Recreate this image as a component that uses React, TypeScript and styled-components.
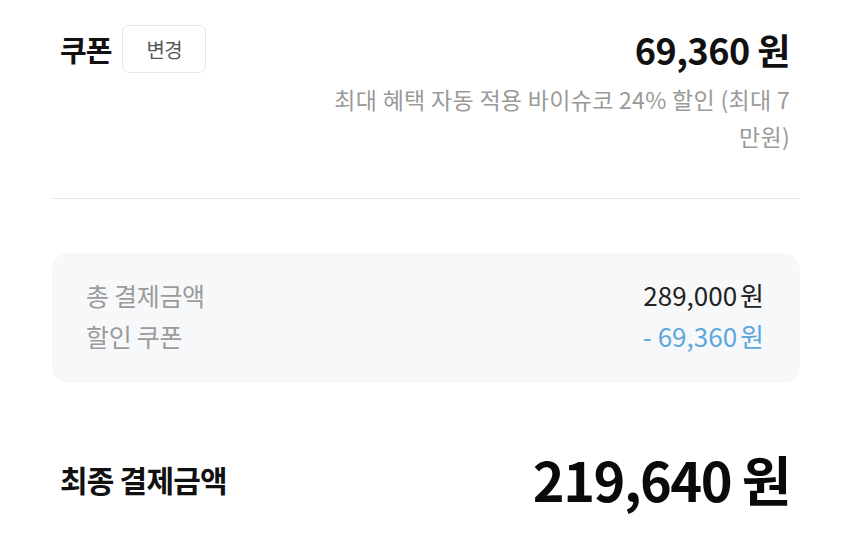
import React from 'react';
import styled, { createGlobalStyle } from 'styled-components';

const GlobalStyle = createGlobalStyle`
	html, body {
		margin: 0;
		padding: 0;
		background: #ffffff;
	}
	body {
		font-family: 'Noto Sans CJK KR', 'Noto Sans', sans-serif;
		color: #111111;
	}
`;

const summary = [
	{ label: '총 결제금액', value: '289,000', discount: false },
	{ label: '할인 쿠폰', value: '- 69,360', discount: true },
];

const App = () => {
	return (
		<Page>
			<GlobalStyle />
			<CouponSection>
				<CouponRow>
					<TitleGroup>
						<SectionTitle>쿠폰</SectionTitle>
						<ChangeButton>변경</ChangeButton>
					</TitleGroup>
					<CouponAmount>69,360 원</CouponAmount>
				</CouponRow>
				<CouponNote>
					최대 혜택 자동 적용 바이슈코 24% 할인 (최대 7 만원)
				</CouponNote>
			</CouponSection>

			<Divider />

			<SummaryBox>
				{summary.map((row) => (
					<SummaryRow key={row.label}>
						<SummaryLabel>{row.label}</SummaryLabel>
						<SummaryValue discount={row.discount}>
							{row.value}
							<Won>원</Won>
						</SummaryValue>
					</SummaryRow>
				))}
			</SummaryBox>

			<TotalRow>
				<TotalLabel>최종 결제금액</TotalLabel>
				<TotalAmount>219,640 원</TotalAmount>
			</TotalRow>
		</Page>
	);
};

export default App;

const Page = styled.div`
	width: 850px;
	height: 539px;
	box-sizing: border-box;
	padding: 0 50px 0 52px;
	display: flex;
	flex-direction: column;
	overflow: hidden;
`;

const CouponSection = styled.div`
	padding: 25px 10px 0 8px;
	display: flex;
	flex-direction: column;
`;

const CouponRow = styled.div`
	display: flex;
	align-items: center;
	justify-content: space-between;
	height: 48px;
`;

const TitleGroup = styled.div`
	display: flex;
	align-items: center;
	gap: 11px;
`;

const SectionTitle = styled.h2`
	margin: 0;
	font-size: 29px;
	font-weight: 700;
	letter-spacing: -1px;
	color: #111111;
`;

const ChangeButton = styled.button`
	width: 84px;
	height: 48px;
	border: 1.5px solid #e6e6e6;
	border-radius: 7px;
	background: #ffffff;
	font-family: inherit;
	font-size: 20px;
	letter-spacing: -0.5px;
	color: #555555;
	cursor: pointer;
`;

const CouponAmount = styled.div`
	font-size: 36px;
	font-weight: 700;
	letter-spacing: -0.5px;
	color: #111111;
`;

const CouponNote = styled.p`
	margin: 8px 0 0 auto;
	max-width: 480px;
	text-align: right;
	font-size: 23px;
	line-height: 37px;
	color: #9a9a9a;
	letter-spacing: 0.3px;
	word-break: keep-all;
`;

const Divider = styled.hr`
	margin: 43px 0 0;
	border: none;
	border-top: 1.5px solid #e8e8e8;
`;

const SummaryBox = styled.div`
	margin-top: 54px;
	height: 130px;
	box-sizing: border-box;
	padding: 21px 36px 0 34px;
	border-radius: 16px;
	background: #f7f8fa;
	display: flex;
	flex-direction: column;
`;

const SummaryRow = styled.div`
	display: flex;
	align-items: center;
	justify-content: space-between;
	height: 41px;
`;

const SummaryLabel = styled.span`
	font-size: 25px;
	color: #9b9b9b;
	letter-spacing: -0.3px;
`;

const SummaryValue = styled.span<{ discount?: boolean }>`
	font-size: 26px;
	letter-spacing: 0;
	color: ${({ discount }) => (discount ? '#5ea7dc' : '#222222')};
`;

const Won = styled.span`
	margin-left: 3px;
`;

const TotalRow = styled.div`
	margin-top: 56px;
	padding: 0 10px 0 8px;
	display: flex;
	align-items: center;
	justify-content: space-between;
`;

const TotalLabel = styled.span`
	font-size: 30px;
	font-weight: 700;
	letter-spacing: -0.8px;
	color: #111111;
`;

const TotalAmount = styled.span`
	font-size: 54px;
	font-weight: 700;
	letter-spacing: -1.5px;
	color: #0a0a0a;
`;
